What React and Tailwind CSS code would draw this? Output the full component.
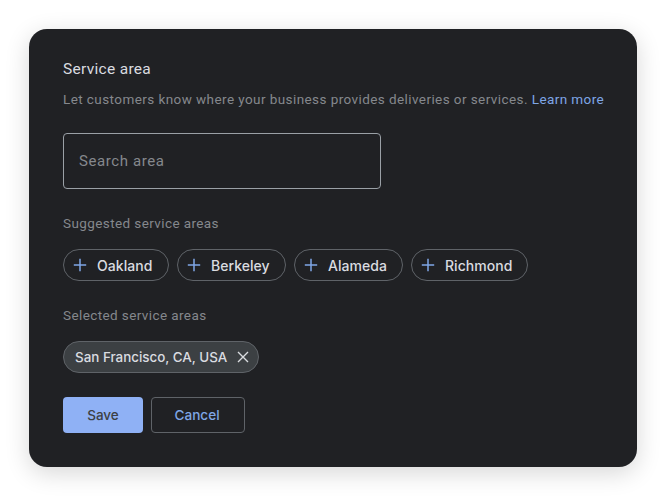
import React from "react";

const Plus = () => (
  <svg width="14" height="14" viewBox="0 0 14 14" className="shrink-0">
    <path d="M7 .8v12.4M.8 7h12.4" stroke="#7fa6e6" strokeWidth="1.5" fill="none" />
  </svg>
);

const Chip = ({ label, w }) => (
  <button className={`flex h-8 items-center gap-[10px] rounded-full border border-[#5f6368] pl-[9px] font-['Inter',sans-serif] text-[14px] font-medium tracking-[0.05px] text-[#dadce0] ${w}`}>
    <Plus />
    {label}
  </button>
);

export default function App() {
  return (
    <div className="h-[496px] w-[666px] bg-white p-[29px] font-['Roboto',sans-serif]">
      <div className="flex h-[438px] w-[608px] flex-col rounded-[18px] bg-[#202124] pl-[34px] pt-[30px] shadow-[0_6px_24px_rgba(0,0,0,0.16)]">
        <h1 className="text-[15.5px] leading-5 tracking-[0.3px] text-[#dadce0]">Service area</h1>
        <p className="mt-[10px] whitespace-nowrap text-[13.5px] leading-5 tracking-[0.42px] text-[#85888d]">
          Let customers know where your business provides deliveries or services.{" "}
          <a className="text-[#7fa6e6]">Learn more</a>
        </p>
        <div className="mt-[24px] flex h-14 w-[318px] items-center rounded border border-[#9aa0a6] pl-[15px] text-[15px] tracking-[0.6px] text-[#85888d]">
          Search area
        </div>
        <p className="mt-[24px] text-[13.5px] leading-5 tracking-[0.4px] text-[#85888d]">Suggested service areas</p>
        <div className="mt-4 flex gap-2">
          <Chip label="Oakland" w="w-[106px]" />
          <Chip label="Berkeley" w="w-[109px]" />
          <Chip label="Alameda" w="w-[109px]" />
          <Chip label="Richmond" w="w-[117px]" />
        </div>
        <p className="mt-6 text-[13.5px] leading-5 tracking-[0.4px] text-[#85888d]">Selected service areas</p>
        <div className="mt-4 flex h-8 w-[196px] items-center rounded-full border border-[#5f6368] bg-[#3c4043] pl-[11px] font-['Inter',sans-serif] text-[13.4px] font-medium text-[#dadce0]">
          San Francisco, CA, USA
          <svg width="12" height="12" viewBox="0 0 12 12" className="ml-[10px] shrink-0">
            <path d="M1 1l10 10M11 1L1 11" stroke="#dadce0" strokeWidth="1.4" fill="none" />
          </svg>
        </div>
        <div className="mt-6 flex gap-2">
          <button className="h-9 w-20 rounded bg-[#8fb1f5] font-['Inter',sans-serif] text-[13.5px] font-medium text-[#3c4043]">Save</button>
          <button className="h-9 w-[94px] rounded border border-[#5f6368] pr-[2px] font-['Inter',sans-serif] text-[13.6px] font-medium text-[#7fa6e6]">Cancel</button>
        </div>
      </div>
    </div>
  );
}
